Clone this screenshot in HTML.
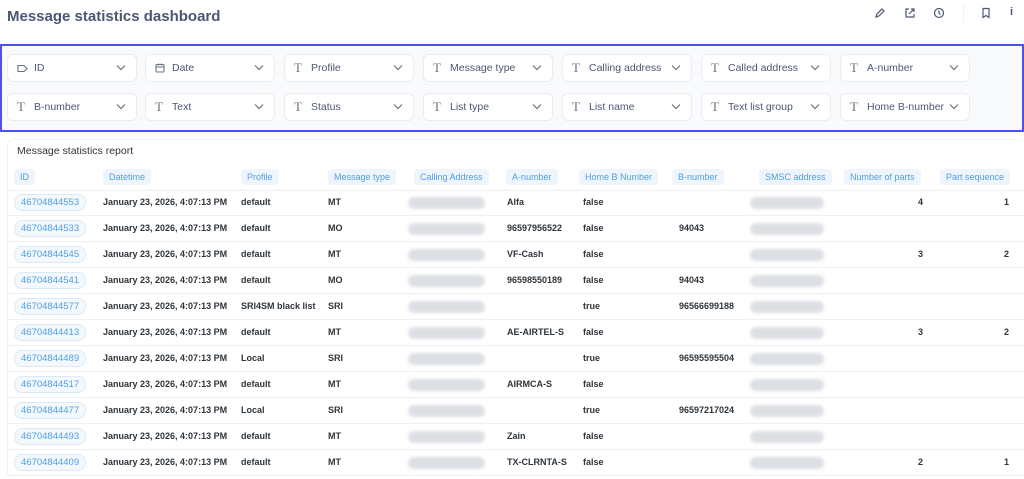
<!DOCTYPE html>
<html><head><meta charset="utf-8"><style>
*{box-sizing:border-box;margin:0;padding:0}
body{width:1024px;height:472px;overflow:hidden;background:#fff;font-family:"Liberation Sans",sans-serif;color:#2e353b;position:relative}
.title{position:absolute;left:7px;top:8px;font-size:15px;font-weight:bold;color:#4c5773}
.ic{position:absolute;top:6px}
.fbox{position:absolute;left:0;top:44px;width:1024px;height:88px;border:2px solid #5050e8;background:#f9fafc}
.f{position:absolute;width:130px;height:28px;background:#fff;border:1px solid #e9ecf0;border-radius:6px;font-size:10.5px;color:#4c5773;line-height:26px;padding-left:26px}
.f .t{position:absolute;left:9px;top:0;font-family:"Liberation Serif",serif;font-size:13px;color:#6b7380}
.f svg.ch{position:absolute;right:10px;top:9px}
.card{position:absolute;left:7px;top:139px;width:1017px;height:340px;background:#fff;border-top:1px solid #f2f3f5;border-left:1px solid #f2f3f5;border-radius:6px}
.rt{position:absolute;left:17px;top:145px;font-size:10.5px;color:#2e353b}
.h{position:absolute;top:169px;height:16px;line-height:16px;background:#eef5fc;color:#509ee3;font-size:9px;border-radius:4px;padding:0 6px}
.row{position:absolute;left:7px;width:1017px;height:26px;border-bottom:1px solid #eef0f3}
.c{position:absolute;font-size:9px;font-weight:bold;color:#2e353b;top:7px}
.id{position:absolute;left:7px;top:4px;height:17px;line-height:15px;padding:0 6px;border:1px solid #dbe9f7;background:#f3f8fd;border-radius:8px;color:#509ee3;font-size:9.5px}
.bl{position:absolute;top:7px;height:12px;border-radius:6px;background:#dcdfe4;filter:blur(1.5px)}
</style></head><body>
<div class="title">Message statistics dashboard</div>
<svg class="ic" style="left:873px" width="14" height="14" viewBox="0 0 14 14" fill="none" stroke="#4c5773" stroke-width="1.2"><path d="M3 11l1-3 5-5 2 2-5 5z"/></svg>
<svg class="ic" style="left:903px" width="14" height="14" viewBox="0 0 14 14" fill="none" stroke="#4c5773" stroke-width="1.2"><path d="M6 3H3v8h8V8M8 3h3v3M11 3L6 8"/></svg>
<svg class="ic" style="left:932px" width="14" height="14" viewBox="0 0 14 14" fill="none" stroke="#4c5773" stroke-width="1.2"><circle cx="7" cy="7" r="4.5"/><path d="M7 4.5V7l1.5 1.5"/></svg>
<div style="position:absolute;left:963px;top:4px;width:1px;height:18px;background:#eef0f3"></div>
<svg class="ic" style="left:979px" width="14" height="14" viewBox="0 0 14 14" fill="none" stroke="#4c5773" stroke-width="1.2"><path d="M4 2.5h6v9l-3-2-3 2z"/></svg>
<div style="position:absolute;left:1010px;top:6px;font-size:11px;font-weight:bold;color:#4c5773">i</div>

<div class="fbox"></div>
<div id="filters"></div>

<div class="card"></div>
<div class="rt">Message statistics report</div>
<div class="h" style="left:14px">ID</div>
<div class="h" style="left:103px">Datetime</div>
<div class="h" style="left:241px">Profile</div>
<div class="h" style="left:328px">Message type</div>
<div class="h" style="left:414px">Calling Address</div>
<div class="h" style="left:506px">A-number</div>
<div class="h" style="left:579px">Home B Number</div>
<div class="h" style="left:672px">B-number</div>
<div class="h" style="left:759px">SMSC address</div>
<div class="h" style="left:844px">Number of parts</div>
<div class="h" style="left:940px">Part sequence</div>
<div style="position:absolute;left:7px;top:190px;width:1017px;height:1px;background:#eef0f3"></div>
<div id="rows"></div>
<script>
var f=[["ID","id"],["Date","d"],["Profile"],["Message type"],["Calling address"],["Called address"],["A-number"],["B-number"],["Text"],["Status"],["List type"],["List name"],["Text list group"],["Home B-number"]];
var xs=[7,145,284,423,562,701,840],h="";
f.forEach(function(a,i){var x=xs[i%7],y=i<7?54:93;
var icon=a[1]=="id"?'<svg style="position:absolute;left:9px;top:9px" width="11" height="9" viewBox="0 0 11 9" fill="none" stroke="#6b7380" stroke-width="1.1"><path d="M1 1.5h6l3 3-3 3H1z"/></svg>':a[1]=="d"?'<svg style="position:absolute;left:9px;top:8px" width="10" height="10" viewBox="0 0 10 10" fill="none" stroke="#6b7380" stroke-width="1.1"><rect x="1" y="1.5" width="8" height="7.5" rx="1"/><path d="M1 4h8M3.5 0.5v2M6.5 0.5v2"/></svg>':'<span class="t">T</span>';
h+='<div class="f" style="left:'+x+'px;top:'+y+'px">'+icon+a[0]+'<svg class="ch" width="10" height="7" viewBox="0 0 10 7" fill="none" stroke="#6b7380" stroke-width="1.2"><path d="M1 1.5l4 4 4-4"/></svg></div>';});
document.getElementById("filters").innerHTML=h;
var r=[["46704844553","default","MT","Alfa","false","","4","1"],["46704844533","default","MO","96597956522","false","94043","",""],["46704844545","default","MT","VF-Cash","false","","3","2"],["46704844541","default","MO","96598550189","false","94043","",""],["46704844577","SRI4SM black list","SRI","","true","96566699188","",""],["46704844413","default","MT","AE-AIRTEL-S","false","","3","2"],["46704844489","Local","SRI","","true","96595595504","",""],["46704844517","default","MT","AIRMCA-S","false","","",""],["46704844477","Local","SRI","","true","96597217024","",""],["46704844493","default","MT","Zain","false","","",""],["46704844409","default","MT","TX-CLRNTA-S","false","","2","1"]];
h="";r.forEach(function(d,i){var y=190+i*26;
h+='<div class="row" style="top:'+y+'px"><div class="id">'+d[0]+'</div><div class="c" style="left:96px">January 23, 2026, 4:07:13 PM</div><div class="c" style="left:234px">'+d[1]+'</div><div class="c" style="left:321px">'+d[2]+'</div><div class="bl" style="left:401px;width:77px"></div><div class="c" style="left:500px">'+d[3]+'</div><div class="c" style="left:576px">'+d[4]+'</div><div class="c" style="left:672px">'+d[5]+'</div><div class="bl" style="left:743px;width:74px"></div><div class="c" style="left:900px;width:16px;text-align:right">'+d[6]+'</div><div class="c" style="left:990px;width:12px;text-align:right">'+d[7]+'</div></div>';});
document.getElementById("rows").innerHTML=h;
</script>
</body></html>
